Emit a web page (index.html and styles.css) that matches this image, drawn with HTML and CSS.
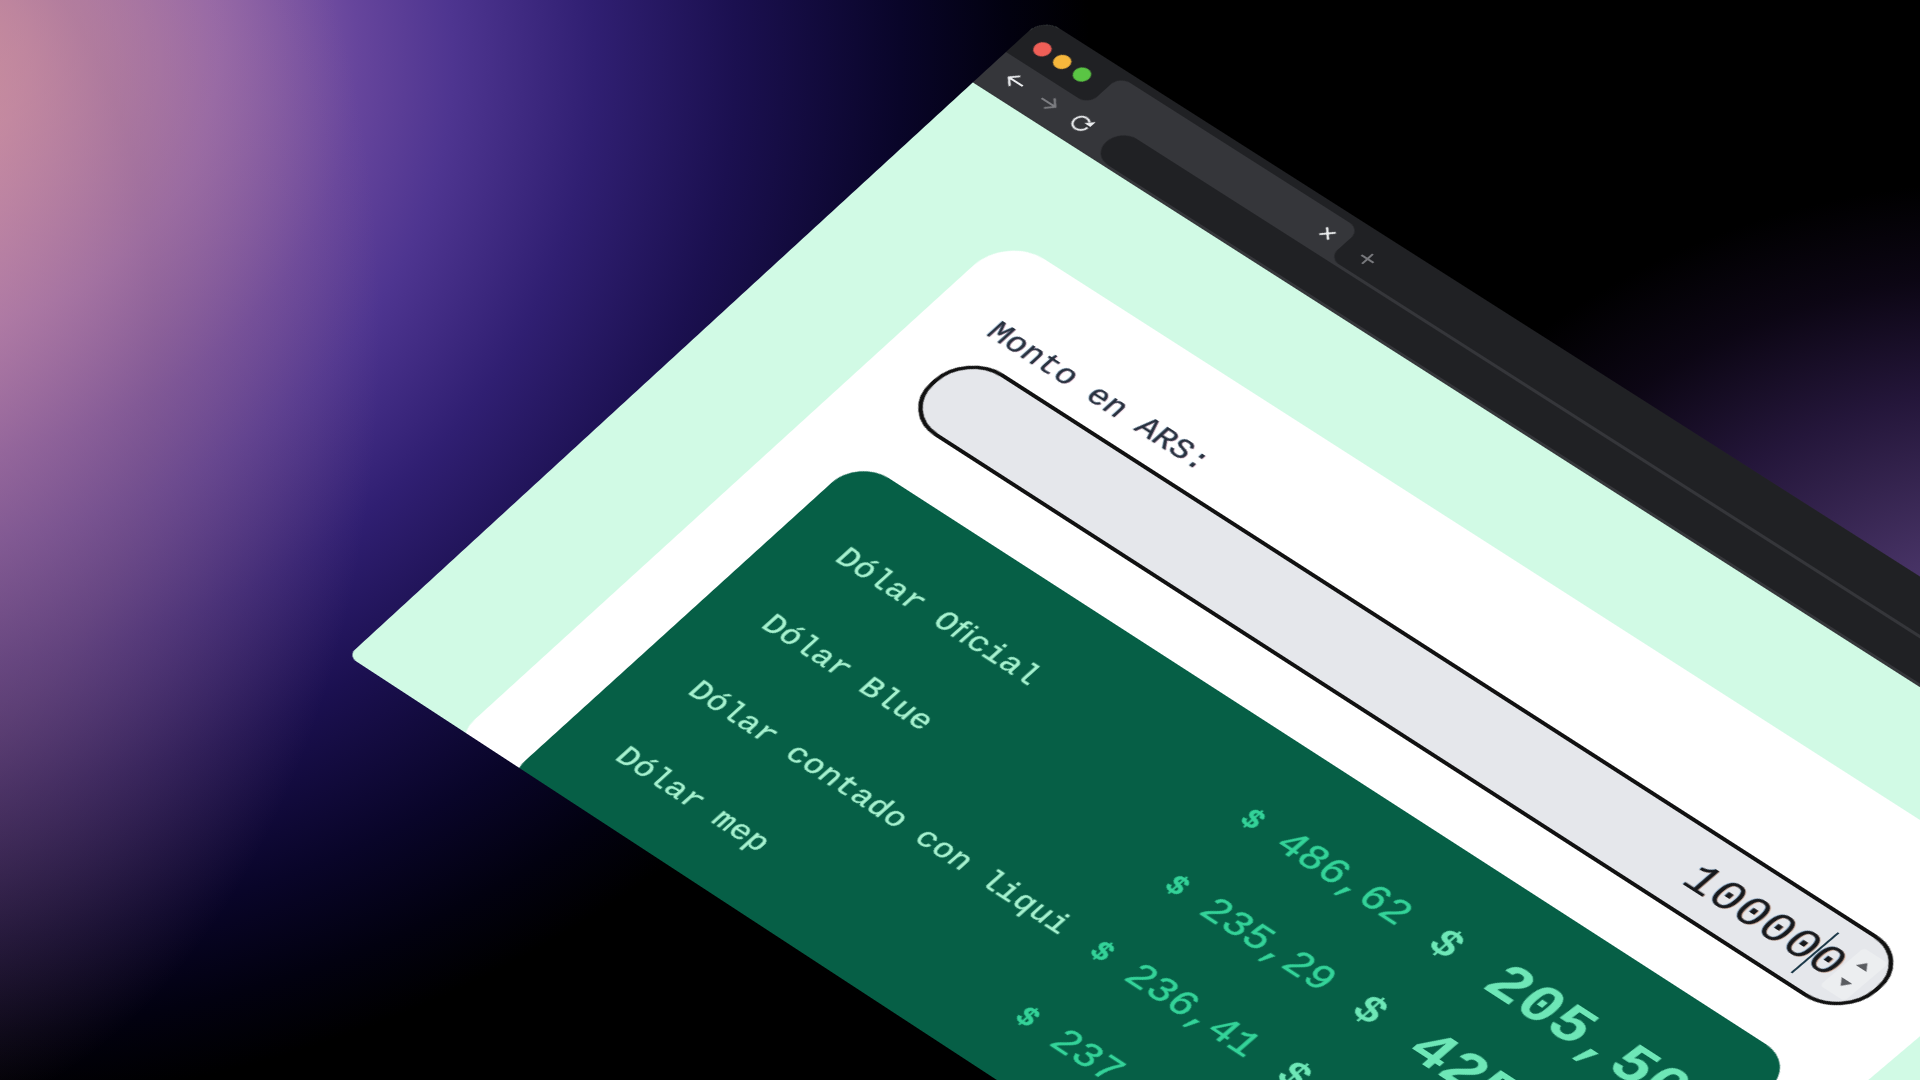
FILE: index.html
```html
<!DOCTYPE html>
<html lang="es">
<head>
<meta charset="utf-8">
<title>Cotización del dólar</title>
<link rel="stylesheet" href="styles.css">
</head>
<body>
<div class="scene">
  <div class="window">
    <div class="tabrow">
      <div class="lights">
        <span class="dot dot-red"></span>
        <span class="dot dot-yellow"></span>
        <span class="dot dot-green"></span>
      </div>
      <div class="tab">
        <svg class="tab-close" viewBox="0 0 14 14"><path d="M2 2 12 12M12 2 2 12"/></svg>
      </div>
      <div class="tabrest">
        <svg class="tab-new" viewBox="0 0 16 16"><path d="M8 1V15M1 8H15"/></svg>
      </div>
    </div>
    <div class="toolbar">
      <div class="nav">
        <svg class="nav-icon" viewBox="0 0 22 22"><path d="M19 11H3M10 4 3 11l7 7"/></svg>
        <svg class="nav-icon nav-off" viewBox="0 0 22 22"><path d="M3 11H19M12 4l7 7-7 7"/></svg>
        <svg class="nav-icon" viewBox="0 0 22 22"><path d="M18.5 11A7.5 7.5 0 1 1 16 5.4"/><path class="fill" d="M20 2v7h-7z"/></svg>
      </div>
      <div class="address"></div>
    </div>
    <main class="page">
      <section class="card">
        <label class="field-label">Monto en ARS:</label>
        <div class="input">
          <span class="input-value">100000<span class="caret"></span></span>
          <span class="spinner"><i class="tri-up"></i><i class="tri-down"></i></span>
        </div>
        <div class="rates">
          <div class="rate">
            <span class="rate-name">Dólar Oﬁcial</span>
            <span class="price"><b class="sign">$</b><span>486,62</span></span>
            <span class="total"><b class="sign-lg">$</b><span>205,50</span></span>
          </div>
          <div class="rate">
            <span class="rate-name">Dólar Blue</span>
            <span class="price"><b class="sign">$</b><span>235,29</span></span>
            <span class="total"><b class="sign-lg">$</b><span>425,00</span></span>
          </div>
          <div class="rate">
            <span class="rate-name">Dólar contado con liqui</span>
            <span class="price"><b class="sign">$</b><span>236,41</span></span>
            <span class="total"><b class="sign-lg">$</b><span>422,99</span></span>
          </div>
          <div class="rate">
            <span class="rate-name">Dólar mep</span>
            <span class="price"><b class="sign">$</b><span>237,12</span></span>
            <span class="total"><b class="sign-lg">$</b><span>421,72</span></span>
          </div>
        </div>
      </section>
    </main>
  </div>
</div>
</body>
</html>
```
FILE: styles.css
```css
* { box-sizing: border-box; }
html, body { margin: 0; height: 100%; background: #000; }
body { font-family: "Liberation Mono", monospace; overflow: hidden; }

.scene {
  position: relative;
  width: 1920px;
  height: 1080px;
  overflow: hidden;
  background:
    radial-gradient(ellipse 680px 520px at 2020px 700px, #5f4484 0%, #463264 30%, #24163a 60%, #0c0614 82%, rgba(0,0,0,0) 100%),
    radial-gradient(ellipse 500px 800px at -120px 330px, rgba(215,150,165,0.6) 0%, rgba(165,115,140,0.42) 55%, rgba(90,60,80,0) 100%),
    radial-gradient(ellipse 1180px 1050px at -90px 60px, #de9fa2 0%, #cb8fa9 10%, #9568ac 26%, #66459c 38%, #4e3590 46%, #301f72 58%, #1b1050 70%, #090529 84%, #020110 93%, #000 100%);
}

.window {
  position: absolute;
  left: 0;
  top: 0;
  width: 1493px;
  height: 945px;
  display: flex;
  flex-direction: column;
  overflow: hidden;
  border-radius: 20px 20px 0 10px;
  background: #d1fae5;
  transform-origin: 0 0;
  transform: matrix3d(0.84678, 0.54772, 0, -0.000013085,
                      -0.72475, 0.69530, 0, 0.000030747,
                      0, 0, 1, 0,
                      1043, 18, 0, 1);
  filter: blur(0.7px);
}

.tabrow {
  flex: none;
  height: 49px;
  display: flex;
  background: linear-gradient(#202124 30px, #35363a 30px);
}
.lights {
  flex: none;
  width: 96px;
  display: flex;
  align-items: flex-start;
  gap: 7px;
  padding: 19px 0 0 15px;
  background: #202124;
  border-bottom-right-radius: 12px;
}
.dot { width: 16px; height: 16px; border-radius: 50%; }
.dot-red { background: #ef5f57; }
.dot-yellow { background: #f6b73c; }
.dot-green { background: #5ac544; }

.tab {
  flex: none;
  width: 278px;
  margin-top: 8px;
  display: flex;
  align-items: center;
  justify-content: flex-end;
  padding: 0 12px 0 0;
  background: #35363a;
  border-radius: 12px 12px 0 0;
}
.tab-close { width: 14px; height: 14px; fill: none; stroke: #f1f3f4; stroke-width: 2; }
.tabrest {
  flex: 1;
  display: flex;
  align-items: center;
  padding: 9px 0 0 19px;
  background: #202124;
  border-bottom-left-radius: 12px;
}
.tab-new { width: 16px; height: 16px; fill: none; stroke: #77787c; stroke-width: 2; }

.toolbar {
  flex: none;
  height: 44px;
  display: flex;
  padding: 3px 0;
  background: #35363a;
}
.nav {
  flex: none;
  width: 136px;
  display: flex;
  align-items: center;
  gap: 16px;
  padding: 0 0 4px 18px;
}
.nav-icon { width: 22px; height: 22px; fill: none; stroke: #eceef0; stroke-width: 2; }
.nav-off { stroke: #7c7d81; }
.nav-icon .fill { fill: #eceef0; stroke: none; }
.address {
  flex: 1;
  background: #202124;
  border-radius: 19px 0 0 19px;
}

.page {
  flex: 1;
  min-height: 0;
  padding: 112px 138px 0;
  background: #d1fae5;
}
.card {
  padding: 69px 62px 0;
  background: #fff;
  border-radius: 44px;
}
.field-label {
  display: block;
  font-size: 32px;
  line-height: 40px;
  color: #27303d;
  margin-left: -2px;
  -webkit-text-stroke: 0.25px #27303d;
  text-shadow: 0.7px 0 rgba(190, 40, 110, 0.35), -0.7px 0 rgba(30, 130, 200, 0.35);
}
.input {
  height: 92px;
  margin: 12px 0 0 -3px;
  display: flex;
  align-items: center;
  justify-content: flex-end;
  padding-right: 10px;
  background: #e5e7eb;
  border: 4px solid #111;
  border-radius: 44px;
}
.input-value {
  position: relative;
  font-size: 47px;
  line-height: 60px;
  letter-spacing: 0.2px;
  color: #17191c;
  top: 5px;
  text-shadow: 0.8px 0 rgba(200, 90, 30, 0.4), -0.8px 0 rgba(30, 120, 200, 0.4);
}
.caret {
  position: absolute;
  right: 27px;
  top: -2px;
  width: 2px;
  height: 60px;
  background: #1d3a4a;
}
.spinner {
  width: 28px;
  height: 56px;
  display: flex;
  flex-direction: column;
  align-items: center;
  justify-content: center;
  gap: 18px;
  background: #eceef0;
  border-radius: 4px;
}
.tri-up, .tri-down { width: 0; height: 0; border-left: 6px solid transparent; border-right: 6px solid transparent; }
.tri-up { border-bottom: 8px solid #5a5c60; }
.tri-down { border-top: 8px solid #5a5c60; }

.rates {
  margin: 62px -4px 0 5px;
  padding: 43px 52px 48px 60px;
  background: #065f46;
  border-radius: 36px;
}
.rate { height: 100px; display: flex; align-items: center; }
.rate-name {
  flex: 1;
  font-size: 32px;
  color: #a7f3d0;
  -webkit-text-stroke: 0.4px #a7f3d0;
}
.price {
  flex: none;
  width: 187px;
  display: flex;
  align-items: center;
  justify-content: space-between;
  font-size: 40px;
  color: #34d399;
  -webkit-text-stroke: 0.5px #34d399;
}
.sign { font-size: 29px; }
.total {
  flex: none;
  width: 284px;
  margin-left: 34px;
  display: flex;
  align-items: center;
  justify-content: space-between;
  font-size: 60px;
  font-weight: 700;
  color: #6ee7b7;
}
.sign-lg { font-size: 42px; }
```
